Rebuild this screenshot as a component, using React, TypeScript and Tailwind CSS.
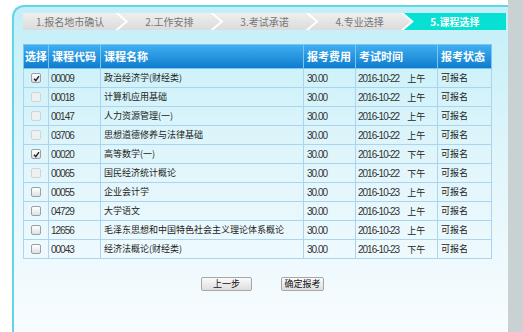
import React from "react";

interface Course {
  code: string;
  name: string;
  date: string;
  half: string;
  checked?: boolean;
  disabled?: boolean;
}

const steps = ["1.报名地市确认", "2.工作安排", "3.考试承诺", "4.专业选择", "5.课程选择"];

const courses: Course[] = [
  { code: "00009", name: "政治经济学(财经类)", date: "2016-10-22", half: "上午", checked: true },
  { code: "00018", name: "计算机应用基础", date: "2016-10-22", half: "上午", disabled: true },
  { code: "00147", name: "人力资源管理(一)", date: "2016-10-22", half: "上午", disabled: true },
  { code: "03706", name: "思想道德修养与法律基础", date: "2016-10-22", half: "上午", disabled: true },
  { code: "00020", name: "高等数学(一)", date: "2016-10-22", half: "下午", checked: true },
  { code: "00065", name: "国民经济统计概论", date: "2016-10-22", half: "下午", disabled: true },
  { code: "00055", name: "企业会计学", date: "2016-10-23", half: "上午" },
  { code: "04729", name: "大学语文", date: "2016-10-23", half: "上午" },
  { code: "12656", name: "毛泽东思想和中国特色社会主义理论体系概论", date: "2016-10-23", half: "上午" },
  { code: "00043", name: "经济法概论(财经类)", date: "2016-10-23", half: "下午" },
];

const cjk = "font-['Noto_Sans_CJK_SC',sans-serif]";
const num = "font-['Liberation_Sans',sans-serif] text-[10px] tracking-[-1px] text-[#333]";

function Box({ checked, disabled }: { checked?: boolean; disabled?: boolean }) {
  return (
    <span
      className={`flex items-center justify-center w-[10px] h-[10px] rounded-[2px] border ${
        disabled ? "border-[#d0d4d6] bg-[#eef1f2]" : "border-[#9aa0a4] bg-gradient-to-b from-white to-[#dde1e3]"
      }`}
    >
      {checked && (
        <svg width="7" height="7" viewBox="0 0 7 7">
          <path d="M1 3.8 L2.8 5.6 L6 1.2" stroke="#222" strokeWidth="1.4" fill="none" />
        </svg>
      )}
    </span>
  );
}

export default function App() {
  return (
    <div className={`flex h-[332px] w-[523px] overflow-hidden bg-white ${cjk}`}>
      <div className="flex flex-col w-[508px] pl-[12px] pt-[5px]">
        <div className="flex-1 flex flex-col rounded-tl-[12px] border-l-2 border-t-2 border-[#62d5e7] bg-gradient-to-b from-[#c3eff8] via-[#e2f6fb] to-[#f8fcff] pl-[9px] pr-[2px] pt-[6px]">
          {/* steps */}
          <div className="flex h-[17px] bg-white">
            {steps.map((s, i) => {
              const last = i === steps.length - 1;
              const clip =
                i === 0
                  ? "[clip-path:polygon(0_0,calc(100%_-_10px)_0,100%_50%,calc(100%_-_10px)_100%,0_100%)]"
                  : last
                  ? "[clip-path:polygon(0_0,100%_0,100%_100%,0_100%,10px_50%)]"
                  : "[clip-path:polygon(0_0,calc(100%_-_10px)_0,100%_50%,calc(100%_-_10px)_100%,0_100%,10px_50%)]";
              return (
                <div
                  key={s}
                  className={`flex-1 flex items-center justify-center text-[10px] ${i > 0 ? "-ml-[7px]" : ""} ${clip} ${
                    last
                      ? "bg-[#08e0d4] text-white font-bold"
                      : "bg-gradient-to-b from-[#efefef] to-[#dbdbdb] text-[#777]"
                  }`}
                >
                  <span className={i === 0 ? "pr-[8px]" : ""}>{s}</span>
                </div>
              );
            })}
          </div>

          {/* course table */}
          <table className="mt-[14px] w-[469px] border-collapse table-fixed">
            <thead>
              <tr className="h-[24px] bg-gradient-to-b from-[#3eaff0] to-[#0a7acd] text-white text-[11px] font-bold text-left">
                <th className="w-[25px] border border-[#7cc6f2] pl-[1px] font-bold">选择</th>
                <th className="w-[52px] border border-[#7cc6f2] pl-[3px] font-bold">课程代码</th>
                <th className="w-[203px] border border-[#7cc6f2] pl-[3px] font-bold">课程名称</th>
                <th className="w-[52px] border border-[#7cc6f2] pl-[3px] font-bold">报考费用</th>
                <th className="w-[82px] border border-[#7cc6f2] pl-[3px] font-bold">考试时间</th>
                <th className="border border-[#7cc6f2] pl-[3px] font-bold">报考状态</th>
              </tr>
            </thead>
            <tbody>
              {courses.map((c) => (
                <tr key={c.code} className="h-[19px] text-[9px] text-[#222]">
                  <td className="border border-[#a9d4f2]">
                    <div className="flex justify-center">
                      <Box checked={c.checked} disabled={c.disabled} />
                    </div>
                  </td>
                  <td className={`border border-[#a9d4f2] pl-[2px] ${num}`}>{c.code}</td>
                  <td className="border border-[#a9d4f2] pl-[3px] whitespace-nowrap overflow-hidden">{c.name}</td>
                  <td className={`border border-[#a9d4f2] pl-[3px] ${num}`}>30.00</td>
                  <td className="border border-[#a9d4f2] pl-[2px] whitespace-nowrap">
                    <span className={num}>{c.date}</span>
                    <span className="ml-[8px]">{c.half}</span>
                  </td>
                  <td className="border border-[#a9d4f2] pl-[3px]">可报名</td>
                </tr>
              ))}
            </tbody>
          </table>

          {/* actions */}
          <div className="flex justify-center gap-[29px] mt-[18px] pr-[4px]">
            <button className="w-[51px] h-[14px] flex items-center justify-center border border-[#a6a6a6] rounded-[2px] bg-gradient-to-b from-[#fafafa] to-[#dedede] text-[9px] text-[#111]">
              上一步
            </button>
            <button className="w-[43px] h-[14px] flex items-center justify-center border border-[#a6a6a6] rounded-[2px] bg-gradient-to-b from-[#fafafa] to-[#dedede] text-[9px] text-[#111]">
              确定报考
            </button>
          </div>
        </div>
      </div>
      <div className="w-[15px] h-full bg-[#c9d1d3]" />
    </div>
  );
}
